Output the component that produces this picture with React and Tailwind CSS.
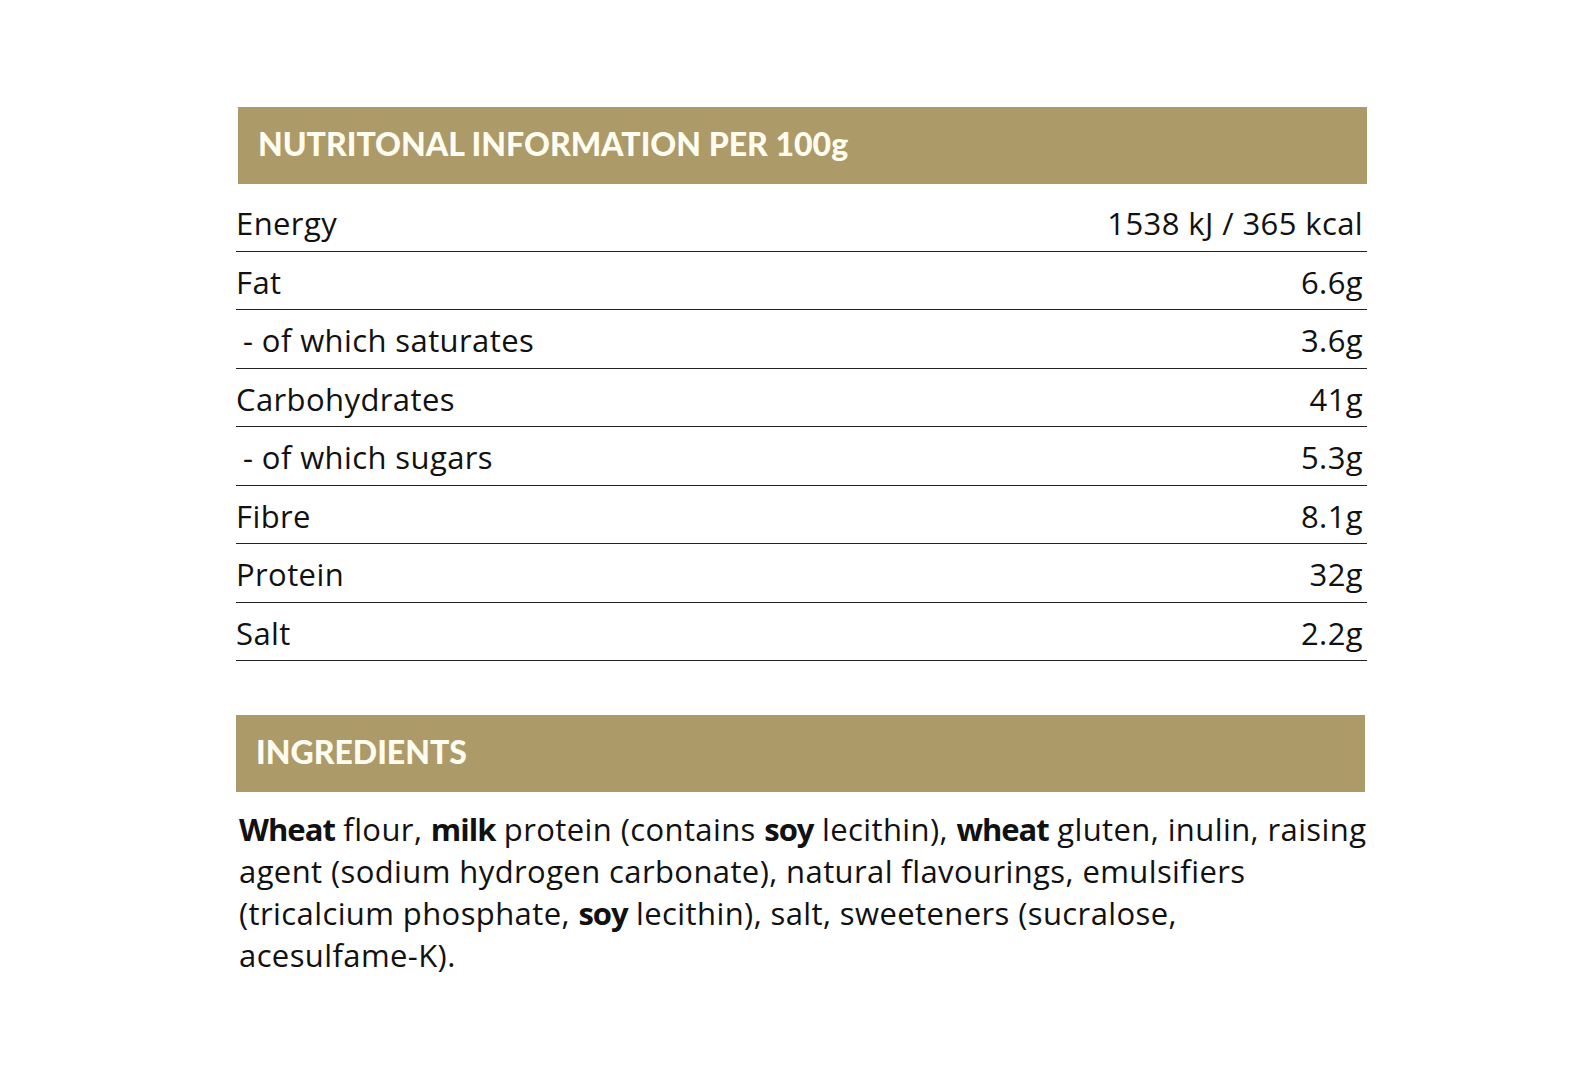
const rows = [
  { label: 'Energy', value: '1538 kJ / 365 kcal' },
  { label: 'Fat', value: '6.6g' },
  { label: '- of which saturates', value: '3.6g', sub: true },
  { label: 'Carbohydrates', value: '41g' },
  { label: '- of which sugars', value: '5.3g', sub: true },
  { label: 'Fibre', value: '8.1g' },
  { label: 'Protein', value: '32g' },
  { label: 'Salt', value: '2.2g' },
]

function SectionHeader({ children, className = '' }) {
  return (
    <div className={`h-[77px] bg-[#ac9a68] flex items-center pl-[20px] ${className}`}>
      <h2 className="text-[32px] font-black text-[#fffcf0] tracking-[0px] font-['Lato',sans-serif] -mt-[3px]">
        {children}
      </h2>
    </div>
  )
}

function B({ children }) {
  return <b className="tracking-[-1px]">{children}</b>
}

export default function App() {
  return (
    <div className="min-h-[1080px] w-[1578px] bg-white font-['Open_Sans',sans-serif] text-[#111]">
      <div className="ml-[236px] pt-[107px] w-[1131px]">
        <SectionHeader className="ml-[2px]">NUTRITONAL INFORMATION PER 100g</SectionHeader>

        {/* Nutrition table */}
        <div className="mt-[9px]">
          {rows.map(row => (
            <div
              key={row.label}
              className="h-[58.5px] border-b-[1.5px] border-[#222] flex justify-between pt-[12px] pr-[4px] text-[31px] leading-[36px] tracking-[0.4px]"
            >
              <span className={row.sub ? 'pl-[7px]' : ''}>{row.label}</span>
              <span>{row.value}</span>
            </div>
          ))}
        </div>

        <SectionHeader className="mt-[54px] mr-[2px]">INGREDIENTS</SectionHeader>

        <p className="mt-[16px] pl-[3px] text-[31px] leading-[42px] tracking-[0.4px]">
          <B>Wheat</B> flour, <B>milk</B> protein (contains <B>soy</B> lecithin), <B>wheat</B> gluten, inulin, raising<br />
          agent (sodium hydrogen carbonate), natural flavourings, emulsifiers<br />
          (tricalcium phosphate, <B>soy</B> lecithin), salt, sweeteners (sucralose,<br />
          acesulfame-K).
        </p>
      </div>
    </div>
  )
}
